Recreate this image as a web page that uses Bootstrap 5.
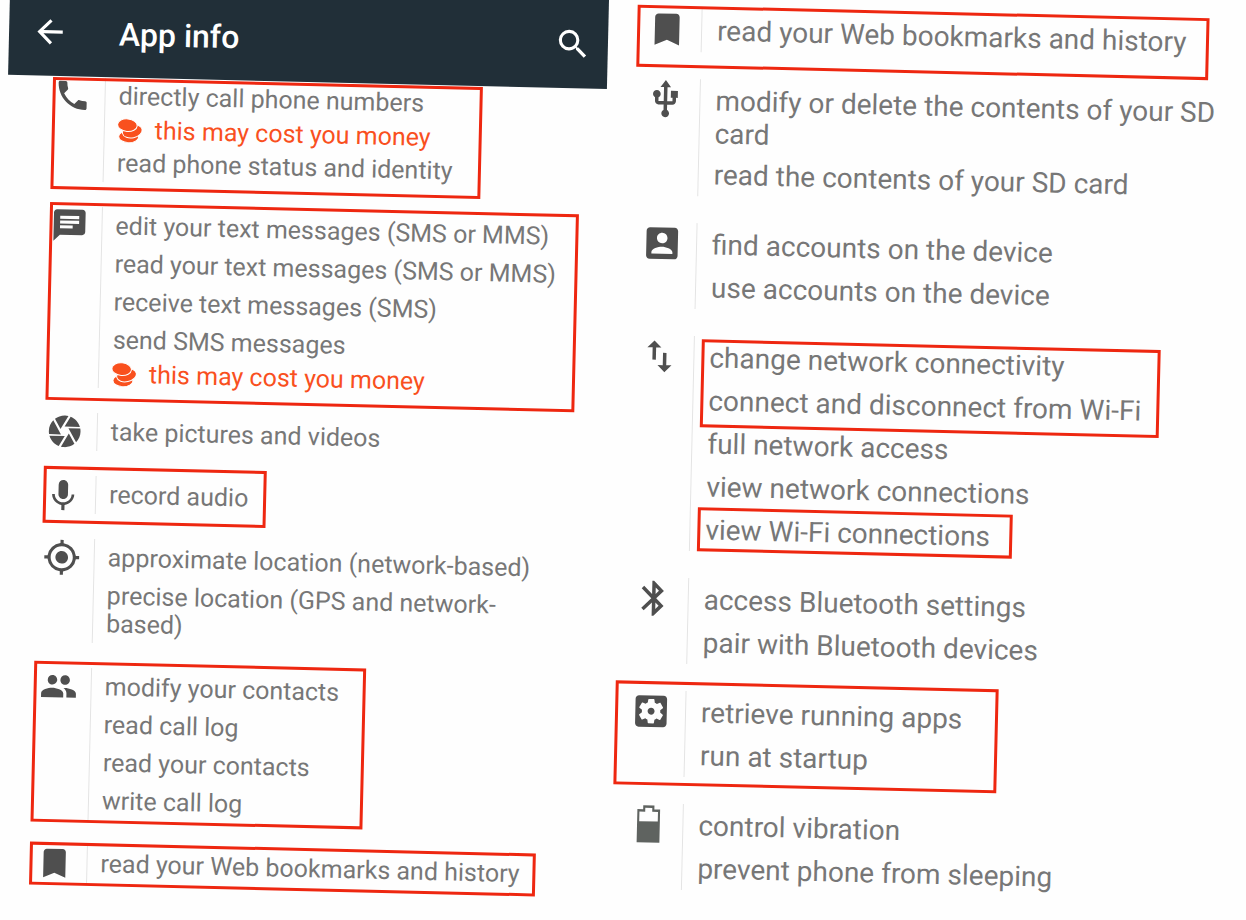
<!DOCTYPE html>
<html lang="en">
<head>
<meta charset="utf-8">
<meta name="viewport" content="width=device-width, initial-scale=1">
<title>App info</title>
<link href="https://cdn.jsdelivr.net/npm/bootstrap@5.3.0/dist/css/bootstrap.min.css" rel="stylesheet">
<style>
  body { font-family: Roboto, "Liberation Sans", sans-serif; background: #fefefe; color: #777; }

  /* Each screen is a sheet tilted slightly clockwise */
  .sheet { transform: rotate(1.35deg); transform-origin: top right; --icon: 38px; --pad: 5px; --indent: 13px; font-size: 25px; line-height: 28px; }
  .sheet-start { margin-left: 10px; margin-right: 14px; }
  .sheet-end { --icon: 42px; --indent: 15px; font-size: 28px; line-height: 33px; padding-top: 22px; }

  .app-bar { background: #212f38; color: #fff; height: 89px; padding: 0 16px 0 22px; }
  .app-bar h1 { font-size: 32px; line-height: 36px; font-weight: 500; margin-left: 50px; padding-top: 3px; }
  .app-bar button { width: 38px; height: 38px; color: #fff; }
  .app-bar svg, .perm-icon { width: 100%; height: 100%; fill: currentColor; display: block; }

  .perm-groups { gap: 25px; padding: 0 32px 0 46px; }
  .sheet-end .perm-groups { gap: 27px; padding: 0 14px 0 24px; }
  .perm-icon { width: var(--icon); height: var(--icon); color: #4f4f4f; }
  .perm-list { margin: 0 0 0 13px; padding-left: var(--indent); border-left: 1px solid #e4e4e4; }
  .perm-list > li, .perm-list li.perm { padding: var(--pad) 0; }
  .perm-list > li.has-cost { padding-bottom: 0; }
  .perm-list > li.wraps { padding-bottom: 3px; }
  .perm-list > li.nested { padding: 0; }
  .cost { color: #f9501e; margin-top: 6px; gap: 13px; }
  .cost svg { width: 24px; height: 24px; }

  /* Red marker frames drawn over the permissions */
  .framed { position: relative; width: fit-content; }
  .framed::after { content: ""; position: absolute; inset: var(--frame); border: 3px solid #ee2710; pointer-events: none; }
  .frame-phone { --frame: 1px -28px -8px -1px; }
  .frame-sms { --frame: -4px -22px -13px -1px; }
  .frame-audio { --frame: -9px -18px -10px -1px; }
  .frame-contacts { --frame: -6px -26px -3px -6px; }
  .frame-web { --frame: -2px -16px -3px -6px; }
  .frame-web-wide { --frame: -3px -22px -16px -9px; }
  .frame-network { --frame: 3px -18px -5px -8px; }
  .frame-wifi { --frame: -1px -22px 0 -8px; }
  .frame-apps { --frame: -9px -36px -9px -15px; }
</style>
</head>
<body>
<svg class="d-none" aria-hidden="true">
  <symbol id="bookmark" viewBox="0 0 24 24"><path d="M17 3H7c-1.100 0-2 .9-2 2v16l7-3 7 3V5c0-1.100-.9-2-2-2z"/></symbol>
  <symbol id="coins" viewBox="0 0 24 24">
    <g fill="#f9501e" stroke="#fefefe" stroke-width="1">
      <ellipse cx="11" cy="18" rx="10" ry="6"/>
      <ellipse cx="14.500" cy="12.500" rx="10" ry="6.500" transform="rotate(-14 14.500 12.500)"/>
      <ellipse cx="9.500" cy="6.500" rx="9.800" ry="6.300" transform="rotate(4 9.500 6.500)"/>
    </g>
  </symbol>
</svg>

<main class="container-fluid p-0 min-vh-100 overflow-hidden">
  <div class="row g-0">
    <section class="col-md-6">
      <div class="sheet sheet-start">
        <header class="app-bar d-flex align-items-center">
          <button type="button" class="btn p-0 border-0" aria-label="Back">
            <svg viewBox="0 0 24 24"><path d="M20 11H7.830l5.590-5.590L12 4l-8 8 8 8 1.410-1.410L7.830 13H20v-2z"/></svg>
          </button>
          <h1 class="mb-0">App info</h1>
          <button type="button" class="btn p-0 border-0 ms-auto" aria-label="Search">
            <svg viewBox="0 0 24 24"><path d="M15.500 14h-.79l-.28-.27A6.470 6.470 0 0 0 16 9.500 6.500 6.500 0 1 0 9.500 16c1.610 0 3.090-.59 4.230-1.570l.27.28v.79l5 4.990L20.490 19l-4.990-5zm-6 0C7.010 14 5 11.990 5 9.500S7.010 5 9.500 5 14 7.010 14 9.500 11.990 14 9.500 14z"/></svg>
          </button>
        </header>

        <div class="perm-groups d-flex flex-column">
          <div class="d-flex framed frame-phone">
            <svg class="perm-icon flex-shrink-0" viewBox="0 0 24 24"><path d="M6.620 10.790c1.440 2.830 3.760 5.140 6.590 6.590l2.200-2.200c.27-.27.67-.36 1.020-.24 1.120.37 2.330.57 3.570.57.55 0 1 .45 1 1V20c0 .55-.45 1-1 1-9.390 0-17-7.610-17-17 0-.55.45-1 1-1h3.500c.55 0 1 .45 1 1 0 1.250.2 2.450.57 3.570.11.35.03.74-.25 1.020l-2.200 2.200z"/></svg>
            <ul class="perm-list list-unstyled">
              <li class="has-cost">directly call phone numbers
                <div class="cost d-flex align-items-center"><svg aria-hidden="true"><use href="#coins"/></svg>this may cost you money</div>
              </li>
              <li>read phone status and identity</li>
            </ul>
          </div>

          <div class="d-flex framed frame-sms">
            <svg class="perm-icon flex-shrink-0" viewBox="0 0 24 24"><path d="M20 2H4c-1.100 0-1.990.9-1.990 2L2 22l4-4h14c1.100 0 2-.9 2-2V4c0-1.100-.9-2-2-2zM6 9h12v2H6V9zm8 5H6v-2h8v2zm4-6H6V6h12v2z"/></svg>
            <ul class="perm-list list-unstyled">
              <li>edit your text messages (SMS or MMS)</li>
              <li>read your text messages (SMS or MMS)</li>
              <li>receive text messages (SMS)</li>
              <li class="has-cost">send SMS messages
                <div class="cost d-flex align-items-center"><svg aria-hidden="true"><use href="#coins"/></svg>this may cost you money</div>
              </li>
            </ul>
          </div>

          <div class="d-flex">
            <svg class="perm-icon flex-shrink-0" viewBox="0 0 24 24"><path d="M9.400 10.500l4.770-8.260C13.470 2.090 12.750 2 12 2c-2.400 0-4.600.85-6.320 2.250l3.660 6.350.06-.1zM21.540 9c-.92-2.920-3.150-5.260-6-6.340L11.880 9h9.660zm.26 1h-7.490l.29.500 4.760 8.250C21 16.970 22 14.610 22 12c0-.69-.07-1.350-.2-2zM8.540 12l-3.900-6.750C3.010 7.030 2 9.390 2 12c0 .69.07 1.350.2 2h7.490l-1.150-2zm-6.080 3c.92 2.920 3.150 5.260 6 6.340L12.120 15H2.460zm11.270 0l-3.900 6.760c.7.15 1.420.24 2.170.24 2.400 0 4.600-.85 6.320-2.250l-3.660-6.350-.93 1.600z"/></svg>
            <ul class="perm-list list-unstyled"><li>take pictures and videos</li></ul>
          </div>

          <div class="d-flex framed frame-audio">
            <svg class="perm-icon flex-shrink-0" viewBox="0 0 24 24"><path d="M12 15c1.660 0 2.990-1.340 2.990-3L15 6c0-1.660-1.340-3-3-3S9 4.340 9 6v6c0 1.660 1.340 3 3 3zm5.300-3c0 3-2.540 5.100-5.300 5.100S6.700 15 6.700 12H5c0 3.410 2.720 6.230 6 6.720V22h2v-3.280c3.280-.48 6-3.300 6-6.720h-1.700z"/></svg>
            <ul class="perm-list list-unstyled"><li>record audio</li></ul>
          </div>

          <div class="d-flex">
            <svg class="perm-icon flex-shrink-0" viewBox="0 0 24 24"><path d="M12 8c-2.210 0-4 1.790-4 4s1.790 4 4 4 4-1.790 4-4-1.790-4-4-4zm8.940 3A8.994 8.994 0 0 0 13 3.060V1h-2v2.060A8.994 8.994 0 0 0 3.060 11H1v2h2.060A8.994 8.994 0 0 0 11 20.940V23h2v-2.060A8.994 8.994 0 0 0 20.940 13H23v-2h-2.060zM12 19c-3.870 0-7-3.130-7-7s3.130-7 7-7 7 3.130 7 7-3.130 7-7 7z"/></svg>
            <ul class="perm-list list-unstyled">
              <li>approximate location (network-based)</li>
              <li>precise location (GPS and network-based)</li>
            </ul>
          </div>

          <div class="d-flex framed frame-contacts">
            <svg class="perm-icon flex-shrink-0" viewBox="0 0 24 24"><path d="M16 11c1.660 0 2.990-1.340 2.990-3S17.660 5 16 5s-3 1.340-3 3 1.340 3 3 3zm-8 0c1.660 0 2.990-1.340 2.990-3S9.660 5 8 5 5 6.340 5 8s1.340 3 3 3zm0 2c-2.330 0-7 1.170-7 3.500V19h14v-2.500c0-2.330-4.670-3.500-7-3.500zm8 0c-.29 0-.62.020-.97.050 1.160.84 1.970 1.970 1.970 3.450V19h6v-2.500c0-2.330-4.670-3.500-7-3.500z"/></svg>
            <ul class="perm-list list-unstyled">
              <li>modify your contacts</li>
              <li>read call log</li>
              <li>read your contacts</li>
              <li>write call log</li>
            </ul>
          </div>

          <div class="d-flex framed frame-web">
            <svg class="perm-icon flex-shrink-0"><use href="#bookmark"/></svg>
            <ul class="perm-list list-unstyled"><li>read your Web bookmarks and history</li></ul>
          </div>
        </div>
      </div>
    </section>

    <section class="col-md-6">
      <div class="sheet sheet-end">
        <div class="perm-groups d-flex flex-column">
          <div class="d-flex framed frame-web-wide">
            <svg class="perm-icon flex-shrink-0"><use href="#bookmark"/></svg>
            <ul class="perm-list list-unstyled"><li>read your Web bookmarks and history</li></ul>
          </div>

          <div class="d-flex">
            <svg class="perm-icon flex-shrink-0" viewBox="0 0 24 24"><path d="M15 7v4h1v2h-3V5h2l-3-4-3 4h2v8H8v-2.070c.7-.37 1.200-1.080 1.200-1.930 0-1.210-.99-2.200-2.200-2.200-1.210 0-2.200.99-2.200 2.200 0 .85.500 1.560 1.200 1.930V13c0 1.110.89 2 2 2h3v3.050c-.71.37-1.200 1.100-1.200 1.950 0 1.220.99 2.200 2.200 2.200 1.210 0 2.200-.98 2.200-2.200 0-.85-.49-1.580-1.200-1.950V15h3c1.110 0 2-.89 2-2v-2h1V7h-4z"/></svg>
            <ul class="perm-list list-unstyled">
              <li class="wraps">modify or delete the contents of your SD card</li>
              <li>read the contents of your SD card</li>
            </ul>
          </div>

          <div class="d-flex">
            <svg class="perm-icon flex-shrink-0" viewBox="0 0 24 24"><path d="M3 5v14c0 1.100.89 2 2 2h14c1.100 0 2-.9 2-2V5c0-1.100-.9-2-2-2H5c-1.110 0-2 .9-2 2zm12 4c0 1.660-1.340 3-3 3s-3-1.340-3-3 1.340-3 3-3 3 1.340 3 3zm-9 8c0-2 4-3.100 6-3.100s6 1.100 6 3.100v1H6v-1z"/></svg>
            <ul class="perm-list list-unstyled">
              <li>find accounts on the device</li>
              <li>use accounts on the device</li>
            </ul>
          </div>

          <div class="d-flex">
            <svg class="perm-icon flex-shrink-0" viewBox="0 0 24 24"><path d="M16 17.010V10h-2v7.010h-3L15 21l4-3.990h-3zM9 3L5 6.990h3V14h2V6.990h3L9 3z"/></svg>
            <ul class="perm-list list-unstyled">
              <li class="nested">
                <ul class="list-unstyled framed frame-network">
                  <li class="perm">change network connectivity</li>
                  <li class="perm">connect and disconnect from Wi-Fi</li>
                </ul>
              </li>
              <li>full network access</li>
              <li>view network connections</li>
              <li class="framed frame-wifi">view Wi-Fi connections</li>
            </ul>
          </div>

          <div class="d-flex">
            <svg class="perm-icon flex-shrink-0" viewBox="0 0 24 24"><path d="M17.710 7.710L12 2h-1v7.590L6.410 5 5 6.410 10.590 12 5 17.590 6.410 19 11 14.410V22h1l5.710-5.710-4.300-4.290 4.300-4.290zM13 5.830l1.880 1.880L13 9.590V5.830zm1.880 10.460L13 18.170v-3.760l1.880 1.880z"/></svg>
            <ul class="perm-list list-unstyled">
              <li>access Bluetooth settings</li>
              <li>pair with Bluetooth devices</li>
            </ul>
          </div>

          <div class="d-flex framed frame-apps">
            <svg class="perm-icon flex-shrink-0" viewBox="0 0 24 24"><path d="M12 10c-1.100 0-2 .9-2 2s.9 2 2 2 2-.9 2-2-.9-2-2-2zm7-7H5c-1.110 0-2 .9-2 2v14c0 1.100.89 2 2 2h14c1.110 0 2-.9 2-2V5c0-1.100-.89-2-2-2zm-1.750 9c0 .23-.02.46-.05.68l1.480 1.160c.13.11.17.3.08.45l-1.400 2.420c-.09.15-.27.21-.43.15l-1.740-.7c-.36.28-.76.51-1.180.69l-.26 1.850c-.03.17-.18.3-.35.3h-2.800c-.17 0-.32-.13-.35-.29l-.26-1.850c-.43-.18-.82-.41-1.180-.69l-1.740.7c-.16.06-.34 0-.43-.15l-1.400-2.420c-.09-.15-.05-.34.08-.45l1.480-1.160c-.03-.23-.05-.46-.05-.69 0-.23.02-.46.05-.68l-1.480-1.160c-.13-.11-.17-.3-.08-.45l1.400-2.420c.09-.15.27-.21.43-.15l1.740.7c.36-.28.76-.51 1.180-.69l.26-1.850c.03-.17.18-.3.35-.3h2.800c.17 0 .32.13.35.29l.26 1.850c.43.18.82.41 1.180.69l1.740-.7c.16-.06.34 0 .43.15l1.400 2.420c.09.15.05.34-.08.45l-1.480 1.160c.03.23.05.46.05.69z"/></svg>
            <ul class="perm-list list-unstyled">
              <li>retrieve running apps</li>
              <li>run at startup</li>
            </ul>
          </div>

          <div class="d-flex">
            <svg class="perm-icon flex-shrink-0" viewBox="0 0 24 24"><path fill="#5f6360" fill-rule="evenodd" d="M5.500 3.500h3.300V1.300h6.400v2.200h3.300v19h-13zM6.700 4.900v5.500h10.600V4.900H14V2.700h-4v2.200z"/></svg>
            <ul class="perm-list list-unstyled">
              <li>control vibration</li>
              <li>prevent phone from sleeping</li>
            </ul>
          </div>
        </div>
      </div>
    </section>
  </div>
</main>
<script src="https://cdn.jsdelivr.net/npm/bootstrap@5.3.0/dist/js/bootstrap.bundle.min.js"></script>
</body>
</html>
